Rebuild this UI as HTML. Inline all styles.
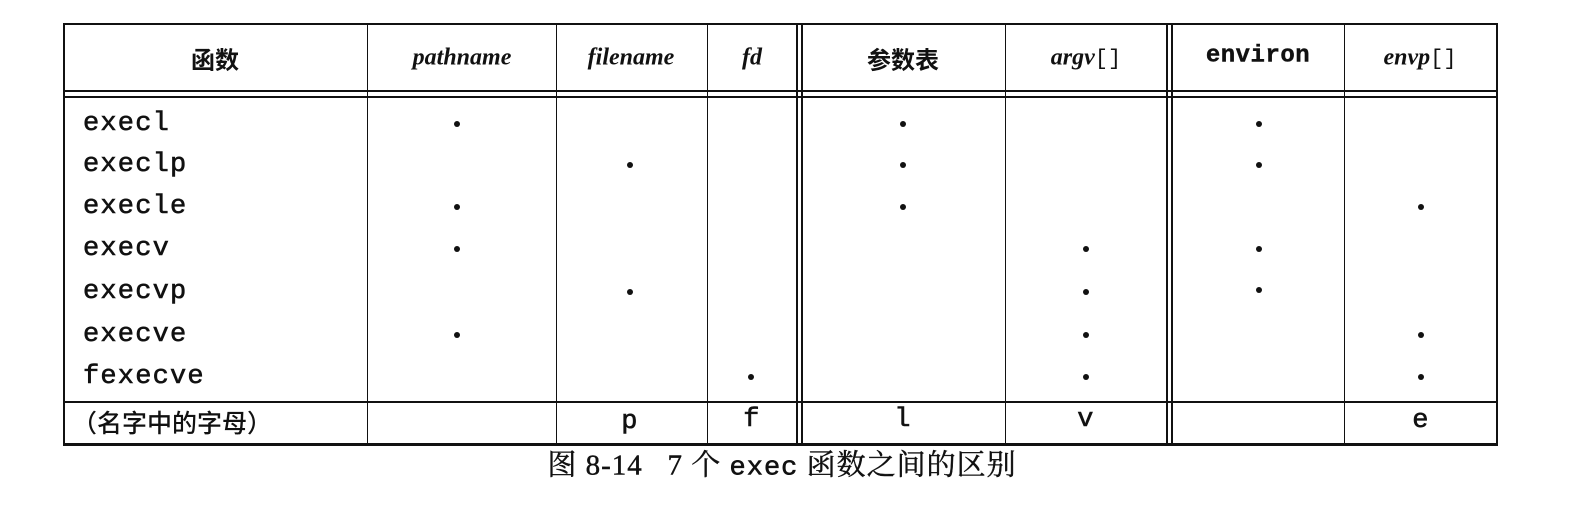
<!DOCTYPE html>
<html><head><meta charset="utf-8"><style>
body{margin:0;width:1577px;height:521px;background:#fff;position:relative;overflow:hidden;font-family:"Liberation Serif","Noto Serif CJK SC",serif;color:#111}
.v{position:absolute;background:#111;width:2px}
.h{position:absolute;background:#111;height:2px}
.t{position:absolute;transform:translate(-50%,-50%);white-space:nowrap}
.m{font-family:"Liberation Mono","Noto Sans CJK SC",monospace;font-size:27px;letter-spacing:1.2px;-webkit-text-stroke:0.6px}
.l{position:absolute;transform:translateY(-50%);white-space:nowrap;left:83px}
.i{font-style:italic;font-weight:bold;font-size:24px}
.c{font-family:"Noto Sans CJK SC",sans-serif;font-size:24px;font-weight:bold}
.d{position:absolute;width:6px;height:6px;border-radius:50%;background:#111;transform:translate(-50%,-50%)}
</style></head><body>
<div class="h" style="left:63px;width:1435px;top:23px"></div>
<div class="h" style="left:63px;width:1435px;top:90px"></div>
<div class="h" style="left:63px;width:1435px;top:96px"></div>
<div class="h" style="left:63px;width:1435px;top:401px"></div>
<div class="h" style="left:63px;width:1435px;top:443px;height:3px"></div>
<div class="v" style="left:63px;top:23px;height:423px"></div>
<div class="v" style="left:367px;top:23px;height:423px;width:1px"></div>
<div class="v" style="left:556px;top:23px;height:423px;width:1px"></div>
<div class="v" style="left:707px;top:23px;height:423px;width:1px"></div>
<div class="v" style="left:796px;top:23px;height:423px"></div>
<div class="v" style="left:801px;top:23px;height:423px"></div>
<div class="v" style="left:1005px;top:23px;height:423px;width:1px"></div>
<div class="v" style="left:1166px;top:23px;height:423px"></div>
<div class="v" style="left:1171px;top:23px;height:423px"></div>
<div class="v" style="left:1344px;top:23px;height:423px;width:1px"></div>
<div class="v" style="left:1496px;top:23px;height:423px"></div>

<div class="t c" style="left:215px;top:58px">函数</div>
<div class="t i" style="left:462px;top:58px">pathname</div>
<div class="t i" style="left:631px;top:58px">filename</div>
<div class="t i" style="left:752px;top:58px">fd</div>
<div class="t c" style="left:903px;top:58px">参数表</div>
<div class="t" style="left:1086px;top:58px"><span class="i">argv</span><span style="font-family:'Liberation Mono',monospace;font-size:22px">[]</span></div>
<div class="t m" style="left:1258px;top:56px;font-weight:bold;font-size:24px;letter-spacing:0.5px;-webkit-text-stroke:0.4px">environ</div>
<div class="t" style="left:1420px;top:58px"><span class="i">envp</span><span style="font-family:'Liberation Mono',monospace;font-size:22px">[]</span></div>

<div class="l m" style="top:124px">execl</div>
<div class="l m" style="top:165px">execlp</div>
<div class="l m" style="top:207px">execle</div>
<div class="l m" style="top:249px">execv</div>
<div class="l m" style="top:292px">execvp</div>
<div class="l m" style="top:335px">execve</div>
<div class="l m" style="top:377px">fexecve</div>
<div class="l c" style="top:422px;left:72px;font-weight:500;font-size:25px">（名字中的字母）</div>

<div class="d" style="left:457px;top:124px"></div>
<div class="d" style="left:903px;top:124px"></div>
<div class="d" style="left:1259px;top:124px"></div>
<div class="d" style="left:630px;top:165px"></div>
<div class="d" style="left:903px;top:165px"></div>
<div class="d" style="left:1259px;top:165px"></div>
<div class="d" style="left:457px;top:207px"></div>
<div class="d" style="left:903px;top:207px"></div>
<div class="d" style="left:1421px;top:207px"></div>
<div class="d" style="left:457px;top:249px"></div>
<div class="d" style="left:1086px;top:249px"></div>
<div class="d" style="left:1259px;top:249px"></div>
<div class="d" style="left:630px;top:292px"></div>
<div class="d" style="left:1086px;top:292px"></div>
<div class="d" style="left:1259px;top:290px"></div>
<div class="d" style="left:457px;top:335px"></div>
<div class="d" style="left:1086px;top:335px"></div>
<div class="d" style="left:1421px;top:335px"></div>
<div class="d" style="left:751px;top:377px"></div>
<div class="d" style="left:1086px;top:377px"></div>
<div class="d" style="left:1421px;top:377px"></div>

<div class="t m" style="left:630px;top:422px">p</div>
<div class="t m" style="left:752px;top:420px">f</div>
<div class="t m" style="left:903px;top:420px">l</div>
<div class="t m" style="left:1086px;top:420px">v</div>
<div class="t m" style="left:1421px;top:421px">e</div>

<div class="t" style="left:782px;top:463px;font-size:29px;letter-spacing:1px;font-family:'Liberation Serif','Noto Serif CJK SC',serif;-webkit-text-stroke:0.4px">图 8-14&nbsp;&nbsp;&nbsp;7 个 <span class="m" style="font-size:27px;letter-spacing:1px">exec</span> 函数之间的区别</div>
</body></html>
